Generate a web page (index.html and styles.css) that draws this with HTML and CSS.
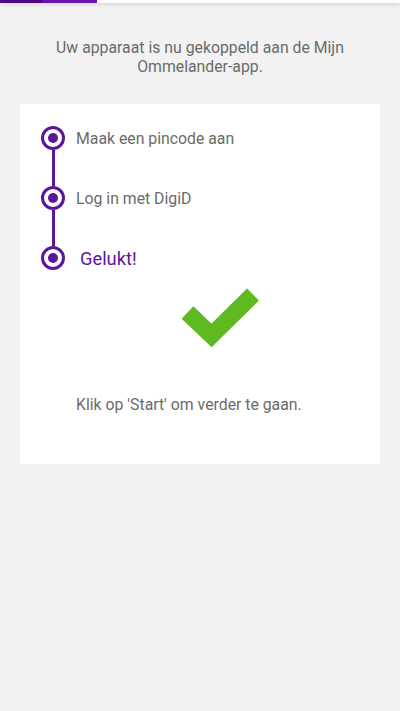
FILE: index.html
```html
<!DOCTYPE html>
<html lang="nl">
<head>
    <meta charset="UTF-8">
    <meta name="viewport" content="width=device-width, initial-scale=1.0">
    <title>Gekoppeld</title>
    <link rel="stylesheet" href="styles.css">
</head>
<body>
    <div class="progress">
        <div class="progress-done"></div>
        <div class="progress-current"></div>
    </div>

    <p class="intro">Uw apparaat is nu gekoppeld aan de Mijn Ommelander-app.</p>

    <div class="card">
        <div class="steps">
            <div class="step">
                <span class="dot"></span>
                <span class="label">Maak een pincode aan</span>
            </div>
            <div class="connector"></div>
            <div class="step">
                <span class="dot"></span>
                <span class="label">Log in met DigiD</span>
            </div>
            <div class="connector"></div>
            <div class="step step-active">
                <span class="dot"></span>
                <span class="label">Gelukt!</span>
            </div>
        </div>

        <div class="check">
            <svg width="80" height="62" viewBox="0 0 80 62">
                <polyline points="7.5,25.5 31.5,48.5 73,7.5" fill="none" stroke="#5fb920" stroke-width="17" stroke-linejoin="miter" stroke-linecap="butt"/>
            </svg>
        </div>

        <p class="hint">Klik op 'Start' om verder te gaan.</p>
    </div>
</body>
</html>
```

FILE: styles.css
```css
html,
body {
    margin: 0;
    padding: 0;
    height: 100%;
}

body {
    background-color: #f2f2f2;
    font-family: Roboto, "Liberation Sans", sans-serif;
    color: #6b6b6b;
}

.progress {
    display: flex;
    height: 3px;
    background-color: #ffffff;
    box-shadow: 0 1px 4px rgba(0, 0, 0, 0.18);
}

.progress-done {
    width: 43px;
    background-color: #4b0a82;
}

.progress-current {
    width: 54px;
    background-color: #6a12b4;
}

.intro {
    margin: 35px 40px 0;
    font-size: 15.8px;
    line-height: 19px;
    text-align: center;
}

.card {
    margin: 28px 20px 0;
    height: 360px;
    box-sizing: border-box;
    padding: 22px 0 0 21px;
    background-color: #ffffff;
}

.steps {
    display: flex;
    flex-direction: column;
}

.step {
    display: flex;
    align-items: center;
    height: 24px;
}

.dot {
    width: 24px;
    height: 24px;
    box-sizing: border-box;
    border: 3px solid #5c1799;
    border-radius: 50%;
    display: flex;
    align-items: center;
    justify-content: center;
    flex-shrink: 0;
}

.dot::before {
    content: "";
    width: 10px;
    height: 10px;
    border-radius: 50%;
    background-color: #5c1799;
}

.label {
    margin-left: 11px;
    font-size: 15.8px;
}

.step-active .label {
    margin-left: 15px;
    font-size: 18.3px;
    color: #5c1799;
}

.connector {
    width: 3px;
    height: 36px;
    margin-left: 10.5px;
    background-color: #5c1799;
}

.check {
    margin: 17px 0 0 139px;
}

.check svg {
    display: block;
}

.hint {
    margin: 46px 0 0 35px;
    font-size: 15.8px;
}
```
